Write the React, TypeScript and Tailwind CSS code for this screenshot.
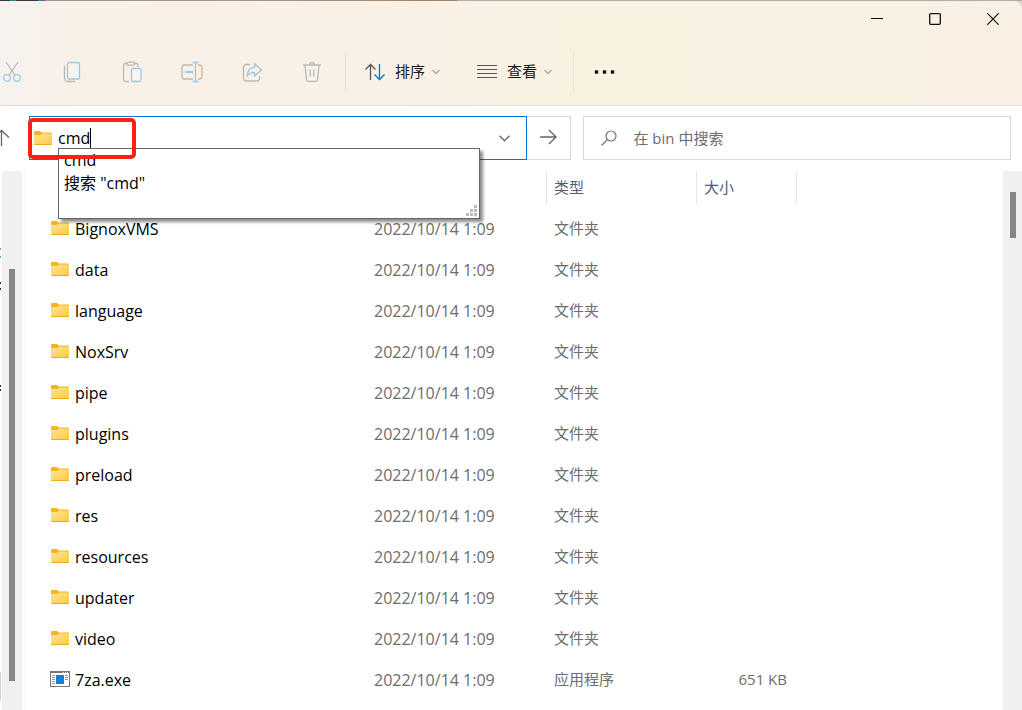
import React, { useState } from 'react';

interface FileEntry {
  name: string;
  modified: string;
  type: string;
  size?: string;
  kind: 'folder' | 'exe';
}

const folder = (name: string): FileEntry => ({
  name,
  modified: '2022/10/14 1:09',
  type: '文件夹',
  kind: 'folder',
});

const files: FileEntry[] = [
  folder('BignoxVMS'),
  folder('data'),
  folder('language'),
  folder('NoxSrv'),
  folder('pipe'),
  folder('plugins'),
  folder('preload'),
  folder('res'),
  folder('resources'),
  folder('updater'),
  folder('video'),
  { name: '7za.exe', modified: '2022/10/14 1:09', type: '应用程序', size: '651 KB', kind: 'exe' },
];

const GRAY = '#bcb8b1';
const BLUE = '#9bc8e6';

const FolderIcon = () => (
  <svg width="18" height="14" viewBox="0 0 18 14" className="shrink-0">
    <defs>
      <linearGradient id="folderFront" x1="0" y1="0" x2="1" y2="1">
        <stop offset="0" stopColor="#ffe69b" />
        <stop offset="1" stopColor="#fdc93e" />
      </linearGradient>
    </defs>
    <path d="M0 1a1 1 0 0 1 1-1h5l2 1.500h9a1 1 0 0 1 1 1V5H0z" fill="#f6b420" />
    <path d="M0 4h6.500l1.500-1.500h10V13a1 1 0 0 1-1 1H1a1 1 0 0 1-1-1z" fill="url(#folderFront)" />
    <path d="M0 13h18a1 1 0 0 1-1 1H1a1 1 0 0 1-1-1z" fill="#ecac25" />
  </svg>
);

const ExeIcon = () => (
  <svg width="20" height="16" viewBox="0 0 20 16" className="shrink-0">
    <rect x="0.500" y="0.500" width="19" height="15" fill="#fff" stroke="#777" />
    <path d="M0 0h20v2H0z" fill="#777" />
    <path d="M13 1.500h1M15 1.500h1M17 1.500h1" stroke="#e5e5e5" />
    <path d="M2 4.500h3M2 6.500h3M2 8.500h3M2 10.500h3M2 12.500h3M15 4.500h3M15 6.500h3M15 8.500h3" stroke="#999" />
    <rect x="6" y="4" width="8" height="9" fill="#1080d8" />
  </svg>
);

const CutIcon = () => (
  <svg width="20" height="22" viewBox="0 0 20 22" fill="none">
    <path d="M4 1l9.500 14M16 1L6.500 15" stroke={GRAY} strokeWidth="1.300" />
    <circle cx="5" cy="17" r="3.300" stroke={BLUE} strokeWidth="1.300" fill="#f8f5f0" />
    <circle cx="15" cy="17" r="3.300" stroke={BLUE} strokeWidth="1.300" fill="#f8f5f0" />
  </svg>
);

const CopyIcon = () => (
  <svg width="20" height="22" viewBox="0 0 20 22" fill="none">
    <path d="M2.500 4.500V17a3.500 3.500 0 0 0 3.500 3.500h7" stroke={GRAY} strokeWidth="1.300" />
    <rect x="5.500" y="1.500" width="12" height="16.500" rx="2" stroke={BLUE} strokeWidth="1.300" fill="#f8f5f0" />
  </svg>
);

const PasteIcon = () => (
  <svg width="20" height="22" viewBox="0 0 20 22" fill="none">
    <path d="M7 20.500H3.500a2 2 0 0 1-2-2v-14a2 2 0 0 1 2-2H5M12 2.500h2a2 2 0 0 1 2 2V6" stroke={GRAY} strokeWidth="1.300" />
    <rect x="5" y="1.200" width="7.500" height="3" rx="1.500" stroke={GRAY} strokeWidth="1.300" />
    <rect x="9.500" y="7.500" width="9.500" height="13" rx="1.500" stroke={BLUE} strokeWidth="1.300" fill="#f8f5f0" />
  </svg>
);

const RenameIcon = () => (
  <svg width="22" height="22" viewBox="0 0 22 22" fill="none">
    <path d="M12 18H3.500a2.500 2.500 0 0 1-2.500-2.500v-9A2.500 2.500 0 0 1 3.500 4H12M17 4h1.500A2.500 2.500 0 0 1 21 6.500v9a2.500 2.500 0 0 1-2.500 2.500h-1.500" stroke={GRAY} strokeWidth="1.300" />
    <path d="M14.500 1.500v19M11.500 1.500h6M11.500 20.500h6" stroke={BLUE} strokeWidth="1.300" />
    <path d="M4 11h8" stroke={BLUE} strokeWidth="2" />
  </svg>
);

const ShareIcon = () => (
  <svg width="22" height="22" viewBox="0 0 22 22" fill="none">
    <path d="M9 3.500H5A2.500 2.500 0 0 0 2.500 6v11.500A2.500 2.500 0 0 0 5 20h11a2.500 2.500 0 0 0 2.500-2.500V15" stroke={GRAY} strokeWidth="1.300" />
    <path d="M13.500 2.500L20.500 9l-7 6v-3.500c-3.500 0-5.500 1-7.500 3.500.5-5 3-8.500 7.500-8.700z" stroke={BLUE} strokeWidth="1.300" strokeLinejoin="round" />
  </svg>
);

const DeleteIcon = () => (
  <svg width="20" height="22" viewBox="0 0 20 22" fill="none" stroke={GRAY} strokeWidth="1.300">
    <path d="M3 4l1.500 14.500a2 2 0 0 0 2 1.800h7a2 2 0 0 0 2-1.800L17 4" fill="#f7f3ed" />
    <path d="M1 4h18M7.500 4a2.500 2.500 0 0 1 5 0M8.200 8.500v7M11.800 8.500v7" />
  </svg>
);

const SortIcon = () => (
  <svg width="20" height="18" viewBox="0 0 20 18" fill="none" strokeWidth="1.300">
    <path d="M5.500 17V1.500M0.500 6.500l5-5 5 5" stroke="#555" />
    <path d="M14.500 1v15.500M9.500 11.500l5 5 5-5" stroke="#0078d4" />
  </svg>
);

const ViewIcon = () => (
  <svg width="20" height="14" viewBox="0 0 20 14" stroke="#5b5955">
    <path d="M0 0.500h20M0 4.500h20M0 8.500h20M0 12.500h20" />
  </svg>
);

const ChevronIcon = ({ size = 8 }: { size?: number }) => (
  <svg width={size} height={size} viewBox="0 0 10 10" fill="none" stroke="#666" strokeWidth="1.200">
    <path d="M0.500 2.500L5 7l4.500-4.500" />
  </svg>
);

const tools = [
  { label: '剪切', icon: <CutIcon /> },
  { label: '复制', icon: <CopyIcon /> },
  { label: '粘贴', icon: <PasteIcon /> },
  { label: '重命名', icon: <RenameIcon /> },
  { label: '共享', icon: <ShareIcon /> },
  { label: '删除', icon: <DeleteIcon /> },
];

const Header = () => (
  <header className="bg-[#d9d3c8]">
    <div className="h-px bg-[linear-gradient(90deg,#3a3340_0_10px,#209090_10px_16px,#3a3340_16px_38px,#209090_38px_42px,#9040c0_42px_45px,#9a958f_45px,#a89a8c_230px,#a08060_457px,#b0aeac_458px)]" />
    <div className="rounded-tr-lg border-b border-[#e3dcd2] bg-[linear-gradient(90deg,#f6f2ee_0%,#f9f1e8_7%,#f9f1e6_40%,#f9f2e1_56%,#f9f2e2_82%,#f9f0e4_100%)]">
      <div className="flex h-9 justify-end">
        <button aria-label="最小化" className="flex w-[58px] items-center justify-center">
          <svg width="12" height="12" viewBox="0 0 12 12" stroke="#111"><path d="M0 5.500h12" /></svg>
        </button>
        <button aria-label="最大化" className="flex w-[58px] items-center justify-center">
          <svg width="12" height="12" viewBox="0 0 12 12" fill="none" stroke="#111" strokeWidth="1.300"><rect x="0.700" y="0.700" width="10.600" height="10.600" rx="1" /></svg>
        </button>
        <button aria-label="关闭" className="flex w-[58px] items-center justify-center">
          <svg width="12" height="12" viewBox="0 0 12 12" stroke="#111" strokeWidth="1.200"><path d="M0.300 0.300l11.400 11.400M11.700 0.300L0.300 11.700" /></svg>
        </button>
      </div>
      <div className="flex h-[68px] items-center pt-px text-[15px] text-[#1a1a1a]">
        <div className="flex gap-9">
          {tools.map((tool) => (
            <button key={tool.label} aria-label={tool.label} className="flex w-6 items-center justify-center">
              {tool.icon}
            </button>
          ))}
        </div>
        <div className="ml-[21px] h-10 w-px bg-[#ece4da]" />
        <button className="ml-[19px] flex items-center">
          <SortIcon />
          <span className="mr-[7px] ml-2.5">排序</span>
          <ChevronIcon />
        </button>
        <button className="ml-[37px] flex items-center">
          <ViewIcon />
          <span className="mr-[7px] ml-2.5">查看</span>
          <ChevronIcon />
        </button>
        <div className="ml-[21px] h-10 w-px bg-[#ece4da]" />
        <button aria-label="更多" className="ml-5">
          <svg width="22" height="6" viewBox="0 0 22 6" fill="#1a1a1a">
            <circle cx="2.500" cy="3" r="2" />
            <circle cx="10.500" cy="3" r="2" />
            <circle cx="18.500" cy="3" r="2" />
          </svg>
        </button>
      </div>
    </div>
  </header>
);

const AddressBar = () => {
  const [path, setPath] = useState('cmd');
  const [query, setQuery] = useState('');

  return (
    <div className="flex items-center pt-2.5 pr-[11px] pb-[11px]">
      <button aria-label="上移" className="flex w-[29px] shrink-0 items-center">
        <svg width="10" height="18" viewBox="0 0 10 18" fill="none" stroke="#666" strokeWidth="1.300">
          <path d="M1.500 17V1.500M-6 8.500l7.500-7 7.500 7" />
        </svg>
      </button>
      <div className="relative flex h-11 min-w-0 flex-[7] items-center border border-[#0078d4]">
        <div className="ml-1 flex items-center gap-1.5">
          <FolderIcon />
          <input
            aria-label="地址"
            value={path}
            onChange={(e) => setPath(e.target.value)}
            className="field-sizing-content text-base text-black caret-transparent outline-none"
          />
        </div>
        <span className="h-5 w-px bg-black" />
        <button aria-label="历史记录" className="mr-4 ml-auto">
          <ChevronIcon size={11} />
        </button>

        {/* suggestions */}
        <ul className="absolute top-[31px] right-[46px] left-[28px] z-10 h-[71px] border border-[#666] bg-white pl-[5px] text-base leading-[23px] text-black shadow-[3px_3px_3px_rgba(0,0,0,0.45)]">
          <li>cmd</li>
          <li>搜索 "cmd"</li>
          <li className="absolute right-0.5 bottom-0.5" aria-hidden="true">
            <svg width="11" height="11" viewBox="0 0 11 11" fill="#bbb">
              <path d="M8 0h3v3H8zM4 4h3v3H4zM8 4h3v3H8zM0 8h3v3H0zM4 8h3v3H4zM8 8h3v3H8z" />
            </svg>
          </li>
        </ul>
        <div className="pointer-events-none absolute top-px -left-0.5 z-20 h-[41px] w-[108px] rounded-[5px] border-4 border-[#fc2015]" />
      </div>
      <button aria-label="转到" className="flex h-11 w-11 shrink-0 items-center justify-center border border-l-0 border-[#d9d9d9]">
        <svg width="17" height="18" viewBox="0 0 17 18" fill="none" stroke="#666" strokeWidth="1.400">
          <path d="M0 8h16M9 1l7 7-7 7" />
        </svg>
      </button>
      <label className="ml-3 flex h-11 min-w-0 flex-[6] items-center border border-[#d9d9d9]">
        <svg width="16" height="16" viewBox="0 0 16 16" fill="none" stroke="#777" strokeWidth="1.200" className="ml-[17px]">
          <circle cx="10" cy="6" r="5" />
          <path d="M6.500 9.500L0.500 15.500" />
        </svg>
        <input
          aria-label="搜索"
          value={query}
          onChange={(e) => setQuery(e.target.value)}
          placeholder="在 bin 中搜索"
          className="ml-4 min-w-0 flex-1 text-[15px] outline-none placeholder:text-[#6d6d6d]"
        />
      </label>
    </div>
  );
};

const HeadCell = ({ children }: { children?: React.ReactNode }) => (
  <th className="p-0 align-top font-normal">
    <div className="flex h-[33px] items-center border-l border-[#e5e5e5] pl-[7px] text-[#4c607a]">{children}</div>
  </th>
);

const FileTable = () => (
  <table className="w-full table-fixed text-left text-[15px] text-[#6d6d6d]">
    <colgroup>
      <col className="w-[341px]" />
      <col className="w-[180px]" />
      <col className="w-[150px]" />
      <col className="w-[100px]" />
      <col />
    </colgroup>
    <thead>
      <tr className="h-[37px]">
        <th />
        <th />
        <HeadCell>类型</HeadCell>
        <HeadCell>大小</HeadCell>
        <HeadCell />
      </tr>
    </thead>
    <tbody>
      {files.map((file) => (
        <tr key={file.name} className="h-[41px]">
          <td className="p-0">
            <div className={`flex items-center text-base text-black ${file.kind === 'exe' ? 'gap-[5px] pl-[25px]' : 'gap-1.5 pl-[26px]'}`}>
              <span className="pb-0.5">{file.kind === 'exe' ? <ExeIcon /> : <FolderIcon />}</span>
              {file.name}
            </div>
          </td>
          <td className="p-0 pl-2 text-base">{file.modified}</td>
          <td className="p-0 pl-2">{file.type}</td>
          <td className="p-0 pr-[9px] text-right whitespace-nowrap">{file.size}</td>
          <td className="p-0" />
        </tr>
      ))}
    </tbody>
  </table>
);

const App: React.FC = () => (
  <div className="flex min-h-screen flex-col overflow-hidden bg-white font-['Open_Sans','Noto_Sans_CJK_SC',sans-serif]">
    <Header />
    <AddressBar />
    <main className="flex flex-1">
      {/* edge of the navigation pane */}
      <div className="w-0.5 shrink-0 pt-[77px]">
        <div className="h-2.5 w-px border-y-2 border-[#4ba3e3]" />
        <div className="mt-6 h-2 w-px border-y-2 border-[#222]" />
        <div className="mt-[95px] h-1.5 w-px border-y-2 border-[#222]" />
        <div className="mt-[281px] h-7 w-px bg-[#d0d0d0]" />
      </div>
      <div className="w-5 shrink-0 bg-[#f0f0f0] pt-[98px] pl-[7px]">
        <div className="h-[412px] w-1.5 bg-[#868686]" />
      </div>
      <div className="ml-0.5 min-w-0 flex-1 border-l border-[#f5f5f5]">
        <FileTable />
      </div>
      <div className="w-[19px] shrink-0 bg-[#f0f0f0] pt-[21px] pl-[7px]">
        <div className="h-[46px] w-1.5 bg-[#868686]" />
      </div>
    </main>
  </div>
);

export default App;
